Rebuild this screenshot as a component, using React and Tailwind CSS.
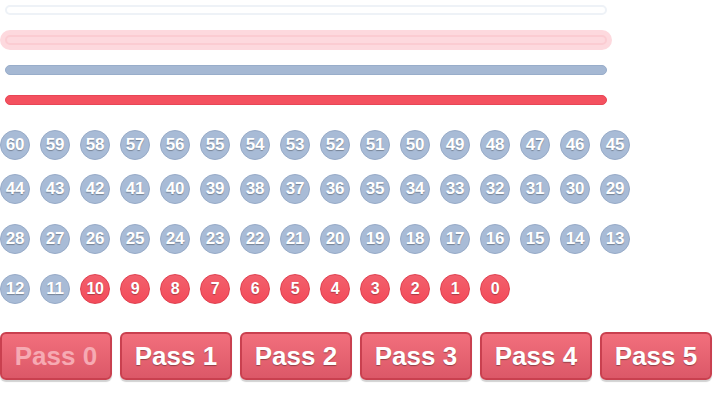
import React from 'react';

const rows = [
  [60, 59, 58, 57, 56, 55, 54, 53, 52, 51, 50, 49, 48, 47, 46, 45],
  [44, 43, 42, 41, 40, 39, 38, 37, 36, 35, 34, 33, 32, 31, 30, 29],
  [28, 27, 26, 25, 24, 23, 22, 21, 20, 19, 18, 17, 16, 15, 14, 13],
  [12, 11, 10, 9, 8, 7, 6, 5, 4, 3, 2, 1, 0],
];

const rowMargins = ['mt-[25px]', 'mt-[14px]', 'mt-[20px]', 'mt-[20px]'];

function Ball({ n }) {
  const red = n <= 10;
  return (
    <div
      className={
        red
          ? 'w-[30px] h-[30px] rounded-full border border-[#e0404f] bg-gradient-to-b from-[#f25f6c] to-[#f34b5a] flex items-center justify-center text-white font-bold text-[16px] tracking-[-0.3px] [text-shadow:0_1px_1px_rgba(0,0,0,0.3)]'
          : 'w-[30px] h-[30px] rounded-full border border-[#97abc8] bg-[#a8bbd6] flex items-center justify-center text-white font-bold text-[17px] tracking-[-0.3px] [text-shadow:0_1px_1px_rgba(0,0,0,0.3)]'
      }
    >
      {n}
    </div>
  );
}

function App() {
  return (
    <div className="w-[720px] h-[400px] bg-white overflow-hidden font-['Liberation_Sans',Arial,sans-serif]">
      <div className="pt-[5px] px-[5px]">
        <div className="w-[602px] h-[10px] rounded-full border-2 border-[#eef2f7] bg-white"></div>
        <div className="mt-[20px] w-[602px] h-[10px] rounded-full border-2 border-[#fbccd2] bg-[#fdd9de] shadow-[0_0_0_5px_#fdd9de]"></div>
        <div className="mt-[20px] w-[602px] h-[10px] rounded-full border border-[#98adca] bg-[#a5b8d3]"></div>
        <div className="mt-[20px] w-[602px] h-[10px] rounded-full border border-[#e84656] bg-[#f4515f]"></div>
      </div>

      {rows.map((row, i) => (
        <div key={i} className={`flex gap-[10px] ${rowMargins[i]}`}>
          {row.map((n) => (
            <Ball key={n} n={n} />
          ))}
        </div>
      ))}

      <div className="flex gap-[8px] mt-[28px]">
        {[0, 1, 2, 3, 4, 5].map((p) => (
          <button
            key={p}
            className={`w-[112px] h-[48px] shrink-0 rounded-[6px] border-2 border-[#c9404f] bg-gradient-to-b from-[#f26f7c] to-[#dc5868] shadow-[0_2px_1px_rgba(0,0,0,0.18)] text-[26px] font-bold leading-none [text-shadow:0_1px_1px_rgba(0,0,0,0.35)] ${
              p === 0 ? 'text-[#f6aab3] [text-shadow:none]' : 'text-white'
            }`}
          >
            Pass {p}
          </button>
        ))}
      </div>
    </div>
  );
}

export default App;
